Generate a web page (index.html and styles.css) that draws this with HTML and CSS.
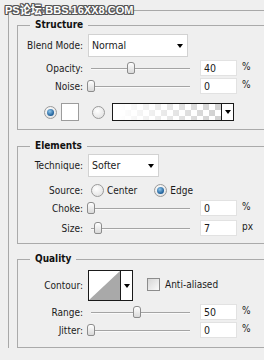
FILE: index.html
```html
<!DOCTYPE html>
<html lang="en">
<head>
    <meta charset="UTF-8">
    <meta name="viewport" content="width=device-width, initial-scale=1.0">
    <title>Inner Glow</title>
    <link rel="stylesheet" href="styles.css">
</head>
<body>
    <div class="mark">PS论坛:BBS.16XX8.COM</div>

    <div class="panel">
        <fieldset class="group">
            <legend>Structure</legend>
            <div class="row blend">
                <span class="lbl">Blend Mode:</span>
                <div class="select wide"><span>Normal</span><i class="arrow"></i></div>
            </div>
            <div class="row num opacity">
                <span class="lbl">Opacity:</span>
                <div class="slider"><span class="thumb" style="left:40%"></span></div>
                <span class="field">40</span><span class="unit">%</span>
            </div>
            <div class="row num noise">
                <span class="lbl">Noise:</span>
                <div class="slider"><span class="thumb" style="left:0%"></span></div>
                <span class="field">0</span><span class="unit">%</span>
            </div>
            <div class="row colors">
                <span class="radio on"></span>
                <span class="swatch"></span>
                <span class="radio"></span>
                <span class="gradient"><span class="fill"></span><span class="drop"><i class="arrow"></i></span></span>
            </div>
        </fieldset>

        <fieldset class="group elements">
            <legend>Elements</legend>
            <div class="row technique">
                <span class="lbl">Technique:</span>
                <div class="select short"><span>Softer</span><i class="arrow"></i></div>
            </div>
            <div class="row source">
                <span class="lbl">Source:</span>
                <span class="radio"></span><span class="opt">Center</span>
                <span class="radio on"></span><span class="opt">Edge</span>
            </div>
            <div class="row num choke">
                <span class="lbl">Choke:</span>
                <div class="slider"><span class="thumb" style="left:0%"></span></div>
                <span class="field">0</span><span class="unit">%</span>
            </div>
            <div class="row num size">
                <span class="lbl">Size:</span>
                <div class="slider"><span class="thumb" style="left:7%"></span></div>
                <span class="field">7</span><span class="unit">px</span>
            </div>
        </fieldset>

        <fieldset class="group quality">
            <legend>Quality</legend>
            <div class="row contour">
                <span class="lbl">Contour:</span>
                <span class="curve">
                    <svg class="preview" width="31" height="29" viewBox="0 0 31 29">
                        <rect width="31" height="29" fill="#fff"/>
                        <polygon points="0,29 31,0 31,29" fill="#a9a9a9"/>
                    </svg>
                    <span class="drop"><i class="arrow"></i></span>
                </span>
                <span class="check"></span><span class="opt">Anti-aliased</span>
            </div>
            <div class="row num range">
                <span class="lbl">Range:</span>
                <div class="slider"><span class="thumb" style="left:46%"></span></div>
                <span class="field">50</span><span class="unit">%</span>
            </div>
            <div class="row num jitter">
                <span class="lbl">Jitter:</span>
                <div class="slider"><span class="thumb" style="left:0%"></span></div>
                <span class="field">0</span><span class="unit">%</span>
            </div>
        </fieldset>
    </div>
</body>
</html>
```

FILE: styles.css
```css
body {
    margin: 0;
    width: 264px;
    height: 360px;
    overflow: hidden;
    background-color: #efefef;
    color: #1b1b1b;
    font-family: "DejaVu Sans Condensed", "DejaVu Sans", sans-serif;
    font-stretch: condensed;
    font-size: 10px;
    line-height: 13px;
    position: relative;
}

.mark {
    position: absolute;
    top: 3px;
    left: 5px;
    font-family: "Liberation Sans", "Noto Sans CJK SC", sans-serif;
    font-stretch: normal;
    font-weight: bold;
    font-size: 11px;
    line-height: 14px;
    color: #fff;
    text-shadow: 1px 0 #555, -1px 0 #555, 0 1px #555, 0 -1px #555,
        1px 1px #555, -1px -1px #555, 1px -1px #555, -1px 1px #555;
    z-index: 2;
}

/* the dialog runs on past the right edge, so no right borders */
.panel {
    margin: 10px 0 0 8px;
    border-left: 1px solid #a8a8a8;
    border-top: 1px solid #a8a8a8;
    padding: 7px 0 0 8px;
}

.group {
    margin: 0;
    padding: 0 0 8px 0;
    border: 1px solid #aaaaaa;
    border-right: none;
    min-width: 0;
}

.group legend {
    margin-left: 12px;
    padding: 0 5px;
    font-weight: bold;
    line-height: 14px;
    color: #111;
}

.elements {
    margin-top: 9px;
    padding-bottom: 6px;
}

.quality {
    margin-top: 8px;
}

.row {
    display: flex;
    align-items: center;
}

.lbl {
    width: 65px;
    margin-right: 5px;
    text-align: right;
    flex-shrink: 0;
}

.num {
    height: 18px;
}

/* row spacing */
.blend { margin-top: 2px; }
.opacity { margin-top: 2px; }
.colors { margin-top: 8px; height: 18px; }
.technique { margin-top: 1px; }
.source { margin-top: 5px; height: 16px; }
.choke { margin-top: 1px; }
.size { margin-top: 2px; }
.contour { margin-top: 4px; }
.range { margin-top: 2px; }

.select {
    height: 21px;
    border: 1px solid #d2d2d2;
    background-color: white;
    display: flex;
    align-items: center;
    justify-content: space-between;
    padding: 0 4px 0 3px;
    font-size: 10.5px;
}
.wide { width: 91px; }
.short { width: 62px; }

.arrow {
    display: block;
    width: 0;
    height: 0;
    border-left: 3.5px solid transparent;
    border-right: 3.5px solid transparent;
    border-top: 4px solid #000;
}

.slider {
    position: relative;
    width: 99px;
    height: 18px;
    margin-left: 3px;
    margin-right: 10px;
}
.slider::before {
    content: "";
    position: absolute;
    left: 0;
    right: 0;
    top: 9px;
    border-top: 1px solid #a4a4a4;
    border-bottom: 1px solid #fafafa;
}

.thumb {
    position: absolute;
    top: 3px;
    width: 6px;
    height: 10px;
    margin-left: -4px;
    border: 1px solid #8c8c8c;
    border-radius: 3px 3px 2px 2px;
    background: linear-gradient(#ffffff, #d9d9d9);
}

.field {
    width: 32px;
    height: 14px;
    border: 1px solid #e2e2e2;
    background-color: white;
    padding-left: 3px;
    line-height: 14px;
    font-size: 10.5px;
}

.unit {
    margin-left: 5px;
    margin-top: -3px;
}

.radio {
    width: 11px;
    height: 11px;
    border: 1px solid #9a9a9a;
    border-radius: 50%;
    background: radial-gradient(circle at 40% 35%, #ffffff, #dcdcdc);
    flex-shrink: 0;
    position: relative;
}
.radio.on::after {
    content: "";
    position: absolute;
    left: 2px;
    top: 2px;
    width: 7px;
    height: 7px;
    border-radius: 50%;
    background: radial-gradient(circle at 40% 35%, #8fc6ec, #1c5d97 70%);
}

.colors .radio:first-child { margin-left: 26px; }

.swatch {
    width: 16px;
    height: 16px;
    border: 1px solid #9c9c9c;
    background-color: white;
    margin: 0 13px 0 4px;
}

.gradient {
    display: flex;
    width: 120px;
    height: 16px;
    border: 1px solid #1a1a1a;
    margin-left: 7px;
}
.gradient .fill {
    flex: 1;
    background:
        linear-gradient(to right, #ffffff 5%, rgba(255,255,255,0) 95%),
        conic-gradient(#d2d2d2 25%, #ffffff 0 50%, #d2d2d2 0 75%, #ffffff 0) 0 0 / 12px 12px;
}

.drop {
    width: 11px;
    border-left: 1px solid #1a1a1a;
    background-color: white;
    display: flex;
    align-items: center;
    justify-content: center;
}

.source .radio { margin-left: 3px; }
.source .radio.on { margin-left: 17px; }
.opt { margin-left: 3px; }

.curve {
    display: flex;
    height: 29px;
    border: 1px solid #1a1a1a;
}
.preview { display: block; }

.check {
    width: 11px;
    height: 11px;
    border: 1px solid #8c8c8c;
    background: linear-gradient(135deg, #d6d6d6, #fbfbfb);
    margin-left: 14px;
    margin-top: -2px;
}
.contour .opt {
    margin-left: 5px;
    margin-top: -2px;
}
```
